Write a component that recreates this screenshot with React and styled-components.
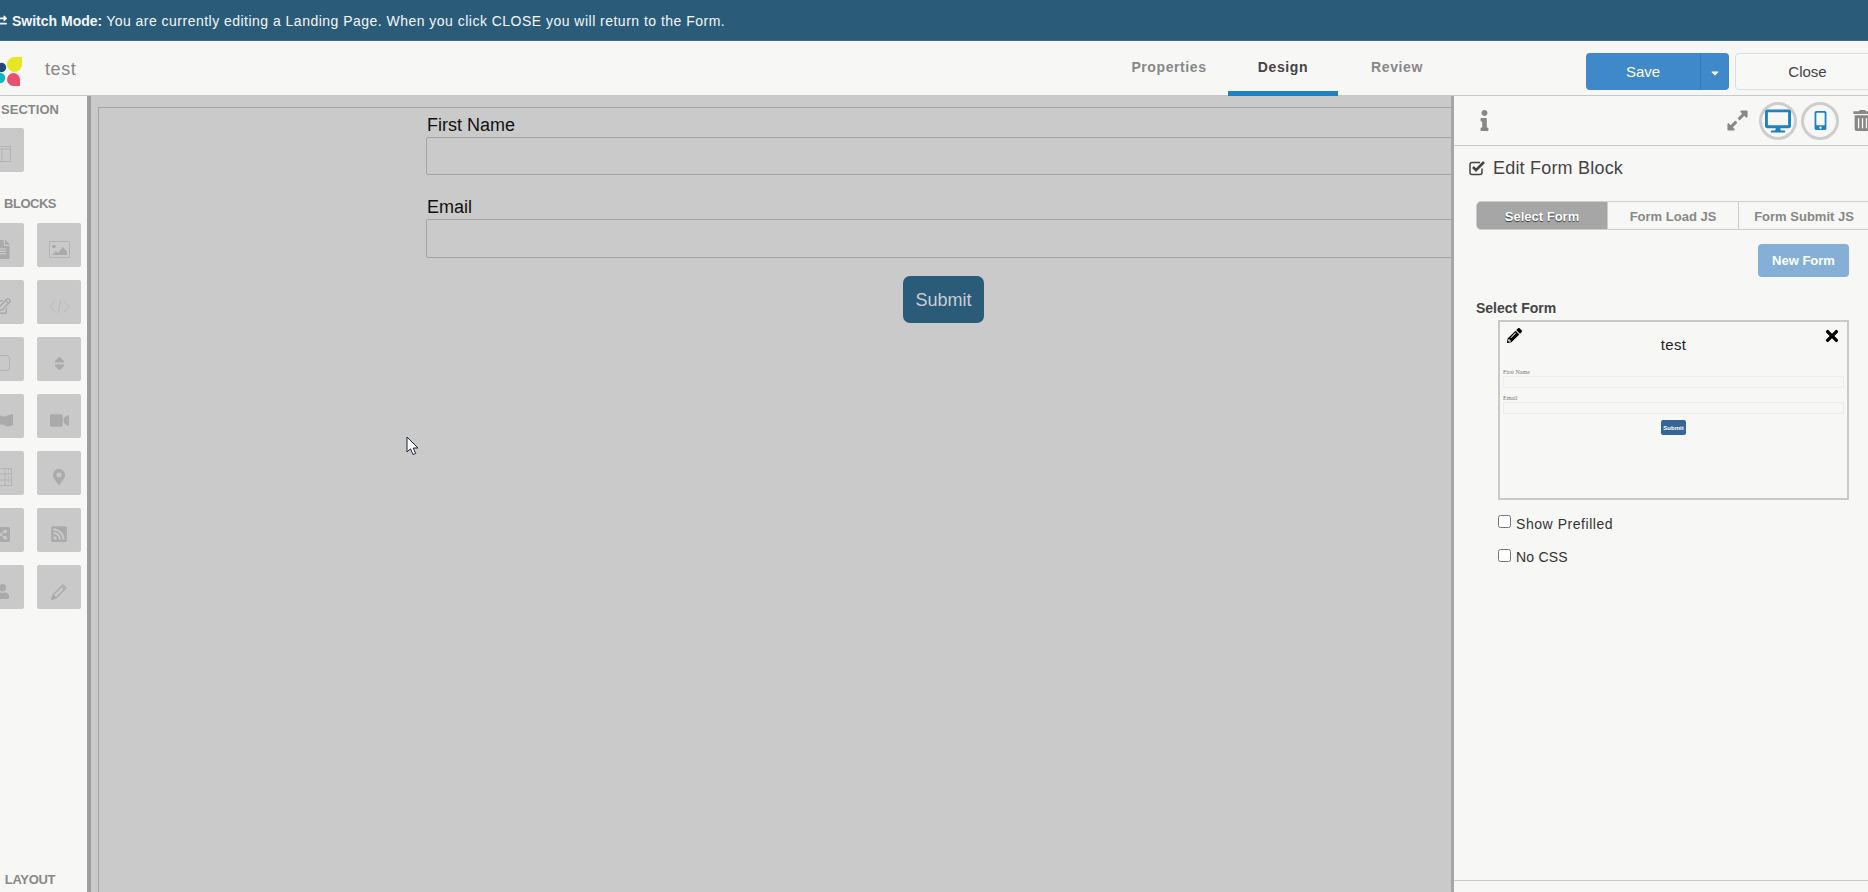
import React from "react";
import styled, { createGlobalStyle } from "styled-components";
import {
  FaExchangeAlt,
  FaFileAlt,
  FaRegEdit,
  FaSort,
  FaVideo,
  FaMapMarkerAlt,
  FaShareAltSquare,
  FaRssSquare,
  FaUser,
  FaPencilAlt,
  FaInfo,
  FaExpandAlt,
  FaDesktop,
  FaMobileAlt,
  FaTrashAlt,
  FaTimes,
  FaCaretDown,
} from "react-icons/fa";

const GlobalStyle = createGlobalStyle`
  html, body {
    margin: 0;
    padding: 0;
    height: 100%;
    overflow: hidden;
    background: #f7f7f5;
    font-family: "Liberation Sans", Arial, sans-serif;
  }
  * {
    box-sizing: border-box;
  }
`;

const Page = styled.div`
  width: 1868px;
  height: 892px;
  display: flex;
  flex-direction: column;
  overflow: hidden;
`;

const Banner = styled.div`
  height: 41px;
  flex-shrink: 0;
  display: flex;
  align-items: center;
  padding-top: 1px;
  background: #2a5c7a;
  color: #f4f6f7;
  font-size: 14px;
  white-space: pre;
  letter-spacing: 0.48px;
  border-bottom: 1px solid #39688a;
  svg {
    margin-left: -7px;
    margin-right: 5px;
    font-size: 14px;
  }
  b {
    font-weight: 700;
    letter-spacing: 0;
  }
`;

const Header = styled.header`
  height: 55px;
  flex-shrink: 0;
  display: flex;
  background: #f7f7f5;
  border-bottom: 1px solid #c9c9c9;
`;

const Logo = styled.svg`
  width: 30px;
  height: 30px;
  margin: 16px 0 0 -8px;
  flex-shrink: 0;
`;

const DocName = styled.div`
  width: 60px;
  flex-shrink: 0;
  margin: 18px 0 0 23px;
  font-size: 18px;
  line-height: 21px;
  letter-spacing: 0.6px;
  color: #888;
`;

const Nav = styled.nav`
  margin-left: 1009px;
  display: flex;
  flex-shrink: 0;
  gap: 4px;
`;

const NavTab = styled.div`
  width: 110px;
  height: 55px;
  padding-top: 18px;
  text-align: center;
  font-size: 14px;
  line-height: 16px;
  font-weight: 700;
  letter-spacing: 0.6px;
  color: ${(p) => (p.$active ? "#444" : "#888")};
  border-bottom: 5px solid ${(p) => (p.$active ? "#1d82c4" : "transparent")};
`;

const SaveGroup = styled.div`
  margin: 12px 0 0 134px;
  display: flex;
  width: 143px;
  height: 37px;
  flex-shrink: 0;
  border-radius: 4px;
  overflow: hidden;
  background: #3f88c9;
  color: #fff;
  font-size: 15px;
`;

const SaveLabel = styled.div`
  width: 115px;
  display: flex;
  align-items: center;
  justify-content: center;
  border-right: 1px solid #3578b4;
`;

const SaveCaret = styled.div`
  flex: 1;
  display: flex;
  align-items: center;
  justify-content: center;
  font-size: 12px;
  padding-top: 3px;
`;

const CloseButton = styled.div`
  margin: 12px 0 0 6px;
  width: 145px;
  height: 37px;
  flex-shrink: 0;
  display: flex;
  align-items: center;
  justify-content: center;
  border: 1px solid #ddd;
  border-radius: 4px;
  background: #f8f8f6;
  color: #444;
  font-size: 15px;
`;

const Body = styled.div`
  flex: 1;
  min-height: 0;
  display: flex;
`;

const Sidebar = styled.aside`
  width: 91px;
  flex-shrink: 0;
  display: flex;
  flex-direction: column;
  padding: 6px 0 4px;
  background: #f7f7f5;
  border-right: 4px solid #9f9f9f;
  overflow: hidden;
`;

const SideLabel = styled.div`
  width: 60px;
  text-align: center;
  font-size: 13px;
  line-height: 16px;
  font-weight: 700;
  letter-spacing: ${(p) => p.$ls || "0"};
  color: #888;
  margin-top: ${(p) => p.$top || "0"};
`;

const TileGrid = styled.div`
  display: grid;
  grid-template-columns: 44px 44px;
  grid-auto-rows: 44px;
  gap: 13px;
  margin: ${(p) => p.$margin} 0 0 -20px;
`;

const Tile = styled.div`
  display: flex;
  align-items: center;
  justify-content: center;
  padding-top: 8px;
  border-radius: 2px;
  background: #c9c9c9;
  color: #aaa;
  font-size: ${(p) => p.$size || "17px"};
`;

const Canvas = styled.main`
  position: relative;
  flex: 1;
  min-width: 0;
  padding: 11px 0 0 7px;
  background: #cacaca;
  overflow: hidden;
`;

const Frame = styled.div`
  height: 100%;
  padding: 6px 0 0 327px;
  border-top: 1px solid #a5a5a5;
  border-left: 1px solid #a5a5a5;
`;

const Form = styled.div`
  width: 1035px;
  display: flex;
  flex-direction: column;
`;

const FieldLabel = styled.div`
  margin-left: 1px;
  font-size: 18px;
  line-height: 23px;
  color: #111;
`;

const Input = styled.div`
  height: ${(p) => p.$h};
  margin-bottom: 21px;
  border: 1px solid #a5a5a5;
  border-radius: 2px;
`;

const SubmitButton = styled.div`
  align-self: center;
  width: 81px;
  height: 47px;
  margin-top: -3px;
  padding-top: 2px;
  display: flex;
  align-items: center;
  justify-content: center;
  background: #2a5c7a;
  border-radius: 7px;
  color: #c9ced2;
  font-size: 18px;
`;

const Pointer = styled.svg`
  position: absolute;
  left: 315px;
  top: 340px;
  width: 13px;
  height: 20px;
`;

const Panel = styled.section`
  width: 417px;
  flex-shrink: 0;
  display: flex;
  flex-direction: column;
  background: #f7f7f5;
  border-left: 3px solid #a5a5a5;
  overflow: hidden;
`;

const PanelBar = styled.div`
  height: 50px;
  flex-shrink: 0;
  display: flex;
  align-items: center;
  padding-left: 20px;
  border-bottom: 1px solid #c9c9c9;
  color: #888;
`;

const InfoIcon = styled(FaInfo)`
  font-size: 21px;
  margin-right: auto;
`;

const ExpandIcon = styled(FaExpandAlt)`
  font-size: 23px;
  margin-right: 10px;
`;

const DeviceButton = styled.div`
  width: 38px;
  height: 38px;
  flex-shrink: 0;
  display: flex;
  align-items: center;
  justify-content: center;
  margin-right: 4px;
  border: 3px solid #cdcdcd;
  border-radius: 50%;
  color: #1d82c4;
  font-size: ${(p) => p.$size};
`;

const TrashIcon = styled(FaTrashAlt)`
  flex-shrink: 0;
  font-size: 21px;
  margin: 0 -5px 0 9px;
`;

const PanelTitle = styled.div`
  margin: 10px 0 0 15px;
  display: flex;
  align-items: center;
  gap: 7px;
  font-size: 18px;
  line-height: 24px;
  letter-spacing: 0.2px;
  color: #444;
`;

const TabRow = styled.div`
  margin: 21px 0 0 22px;
  display: flex;
  height: 29px;
`;

const PanelTab = styled.div`
  width: ${(p) => p.$w};
  flex-shrink: 0;
  display: flex;
  align-items: center;
  justify-content: center;
  padding-top: 2px;
  font-size: 13px;
  font-weight: 700;
  border: 1px solid #cdcdcd;
  border-left-width: ${(p) => (p.$first ? "1px" : "0")};
  border-radius: ${(p) => (p.$first ? "5px 0 0 5px" : "0")};
  background: ${(p) => (p.$active ? "#a6a6a6" : "transparent")};
  color: ${(p) => (p.$active ? "#fff" : "#888")};
  text-shadow: ${(p) => (p.$active ? "0 1px 1px #333" : "none")};
`;

const NewForm = styled.div`
  align-self: flex-end;
  width: 91px;
  height: 33px;
  margin: 14px 19px 0 0;
  display: flex;
  align-items: center;
  justify-content: center;
  border-radius: 4px;
  background: #85afd6;
  color: #fff;
  font-size: 13px;
  font-weight: 700;
`;

const SelectLabel = styled.div`
  margin: 23px 0 0 22px;
  font-size: 14px;
  line-height: 16px;
  font-weight: 700;
  color: #444;
`;

const Preview = styled.div`
  position: relative;
  width: 351px;
  height: 180px;
  margin: 4px 0 0 44px;
  padding: 0 3px;
  border: 2px solid #c9c9c9;
  display: flex;
  flex-direction: column;
`;

const PreviewEdit = styled(FaPencilAlt)`
  position: absolute;
  left: 7px;
  top: 6px;
  font-size: 15px;
  color: #000;
`;

const PreviewRemove = styled(FaTimes)`
  position: absolute;
  right: 6px;
  top: 5px;
  font-size: 18px;
  color: #000;
`;

const PreviewName = styled.div`
  margin-top: 14px;
  text-align: center;
  font-size: 15px;
  line-height: 18px;
  letter-spacing: 0.3px;
  color: #222;
`;

const MiniLabel = styled.div`
  margin-top: ${(p) => p.$top};
  font-family: "Liberation Serif", serif;
  font-size: 6px;
  line-height: 7px;
  color: #777;
`;

const MiniInput = styled.div`
  height: 12px;
  border: 1px solid #ececea;
  border-radius: 1px;
`;

const MiniSubmit = styled.div`
  align-self: center;
  width: 25px;
  height: 15px;
  margin-top: 6px;
  display: flex;
  align-items: center;
  justify-content: center;
  border-radius: 2px;
  background: #336699;
  color: #fff;
  font-size: 6px;
  font-weight: 700;
`;

const CheckRow = styled.label`
  margin: ${(p) => p.$top} 0 0 44px;
  display: flex;
  gap: 5px;
  font-size: 14px;
  line-height: 16px;
  letter-spacing: ${(p) => p.$ls};
  color: #333;
  input {
    width: 13px;
    height: 13px;
    margin: 0;
  }
  span {
    margin-top: ${(p) => p.$nudge};
  }
`;

const PanelFooter = styled.div`
  margin-top: auto;
  height: 12px;
  flex-shrink: 0;
  border-top: 1px solid #c9c9c9;
`;

const WindowGlyph = () => (
  <svg width="18" height="18" viewBox="0 0 18 18" fill="none" stroke="#b2b2b2" strokeWidth="1">
    <path d="M.5 1.5h17v15H.5zM.5 4h17M9 4v12.5" />
  </svg>
);

const ImageGlyph = () => (
  <svg width="21" height="17" viewBox="0 0 21 17" fill="none">
    <path d="M.5.5h20v16H.5z" stroke="#b4b4b4" />
    <circle cx="5" cy="5.5" r="1.8" fill="#aaa" />
    <path d="M3 14l4-4 2 2 5-6 4 5v3z" fill="#aaa" />
  </svg>
);

const CodeGlyph = () => (
  <svg width="21" height="15" viewBox="0 0 21 15" fill="none" stroke="#b4b4b4" strokeWidth="0.8">
    <path d="M6 2 1 7.5 6 13M15 2l5 5.5-5 5.5M12 1 9 14" />
  </svg>
);

const SquareGlyph = () => (
  <svg width="15" height="16" viewBox="0 0 15 16" fill="none" stroke="#b6b3b0" strokeWidth="1">
    <rect x="0.5" y="0.5" width="14" height="15" rx="3" />
  </svg>
);

const MapGlyph = () => (
  <svg width="21" height="13" viewBox="0 0 21 13" fill="#aaa">
    <path d="M0 2c3-2 5-2 7-1s4 2 7 1l7-2v11c-3 1-5 2-7 1s-4-2-7-1l-7 2z" />
  </svg>
);

const TableGlyph = () => (
  <svg width="20" height="18" viewBox="0 0 20 18" fill="none" stroke="#b6b3b0" strokeWidth="1">
    <path d="M.5.5h19v17H.5zM.5 6h19M.5 12h19M13 .5v17" />
    <path d="M16.5.5v17" strokeDasharray="2 2" />
  </svg>
);

const PencilGlyph = () => (
  <svg width="17" height="17" viewBox="0 0 17 17" fill="none" stroke="#aaa" strokeWidth="1.4">
    <path d="M1 16l1-4L12 2l3 3L5 15zM2 12l3 3M10.5 3.5l3 3" />
    <path d="M1 16l.8-2.6 1.8 1.8z" fill="#aaa" />
  </svg>
);

const CheckGlyph = () => (
  <svg width="17" height="16" viewBox="0 0 17 16" fill="none">
    <path d="M13 8.5v4a2 2 0 0 1-2 2H3a2 2 0 0 1-2-2V4.5a2 2 0 0 1 2-2h8" stroke="#444" strokeWidth="1.5" />
    <path d="M4 7l3 3.2L15 2" stroke="#444" strokeWidth="2.6" />
  </svg>
);

const blockIcons = [
  [<FaFileAlt key="a" />, "19px"],
  [<ImageGlyph key="b" />],
  [<FaRegEdit key="c" />, "18px"],
  [<CodeGlyph key="d" />],
  [<SquareGlyph key="e" />],
  [<FaSort key="f" />, "17px"],
  [<MapGlyph key="g" />],
  [<FaVideo key="h" />, "19px"],
  [<TableGlyph key="i" />],
  [<FaMapMarkerAlt key="j" />, "16px"],
  [<FaShareAltSquare key="k" />, "17px"],
  [<FaRssSquare key="l" />, "18px"],
  [<FaUser key="m" />, "15px"],
  [<PencilGlyph key="n" />],
];

export default function App() {
  return (
    <Page>
      <GlobalStyle />
      <Banner>
        <FaExchangeAlt />
        <b>Switch Mode: </b>You are currently editing a Landing Page. When you click CLOSE you
        will return to the Form.
      </Banner>
      <Header>
        <Logo viewBox="0 0 30 30">
          <path d="M30 0v7.5a7.5 7.5 0 1 1-7.5-7.5z" fill="#e6e622" />
          <circle cx="9.5" cy="10.5" r="4.7" fill="#1d4a78" />
          <circle cx="8" cy="21" r="5.2" fill="#12b5c4" />
          <path d="M28 29h-6.5a6.5 6.5 0 1 1 6.5-6.5z" fill="#e9506f" />
        </Logo>
        <DocName>test</DocName>
        <Nav>
          <NavTab>Properties</NavTab>
          <NavTab $active>Design</NavTab>
          <NavTab>Review</NavTab>
        </Nav>
        <SaveGroup>
          <SaveLabel>Save</SaveLabel>
          <SaveCaret>
            <FaCaretDown />
          </SaveCaret>
        </SaveGroup>
        <CloseButton>Close</CloseButton>
      </Header>
      <Body>
        <Sidebar>
          <SideLabel>SECTION</SideLabel>
          <TileGrid $margin="10px">
            <Tile>
              <WindowGlyph />
            </Tile>
          </TileGrid>
          <SideLabel $top="24px" $ls="-0.5px">
            BLOCKS
          </SideLabel>
          <TileGrid $margin="11px">
            {blockIcons.map(([icon, size], i) => (
              <Tile key={i} $size={size}>
                {icon}
              </Tile>
            ))}
          </TileGrid>
          <SideLabel $top="auto" $ls="-0.3px">
            LAYOUT
          </SideLabel>
        </Sidebar>
        <Canvas>
          <Frame>
            <Form>
              <FieldLabel>First Name</FieldLabel>
              <Input $h="38px" />
              <FieldLabel>Email</FieldLabel>
              <Input $h="39px" />
              <SubmitButton>Submit</SubmitButton>
            </Form>
          </Frame>
          <Pointer viewBox="0 0 13 20">
            <path d="M1 1v15l3.5-3.2L7 18.5l2.6-1.1-2.4-5.4H12z" fill="#fff" stroke="#1b2233" strokeWidth="1" />
          </Pointer>
        </Canvas>
        <Panel>
          <PanelBar>
            <InfoIcon />
            <ExpandIcon />
            <DeviceButton $size="26px">
              <FaDesktop />
            </DeviceButton>
            <DeviceButton $size="19px">
              <FaMobileAlt />
            </DeviceButton>
            <TrashIcon />
          </PanelBar>
          <PanelTitle>
            <CheckGlyph />
            Edit Form Block
          </PanelTitle>
          <TabRow>
            <PanelTab $w="132px" $first $active>
              Select Form
            </PanelTab>
            <PanelTab $w="131px">Form Load JS</PanelTab>
            <PanelTab $w="131px">Form Submit JS</PanelTab>
          </TabRow>
          <NewForm>New Form</NewForm>
          <SelectLabel>Select Form</SelectLabel>
          <Preview>
            <PreviewEdit />
            <PreviewRemove />
            <PreviewName>test</PreviewName>
            <MiniLabel $top="15px">First Name</MiniLabel>
            <MiniInput />
            <MiniLabel $top="7px">Email</MiniLabel>
            <MiniInput />
            <MiniSubmit>Submit</MiniSubmit>
          </Preview>
          <CheckRow $top="15px" $ls="0.55px" $nudge="1px">
            <input type="checkbox" />
            <span>Show Prefilled</span>
          </CheckRow>
          <CheckRow $top="17px" $ls="0.2px" $nudge="0">
            <input type="checkbox" />
            <span>No CSS</span>
          </CheckRow>
          <PanelFooter />
        </Panel>
      </Body>
    </Page>
  );
}
